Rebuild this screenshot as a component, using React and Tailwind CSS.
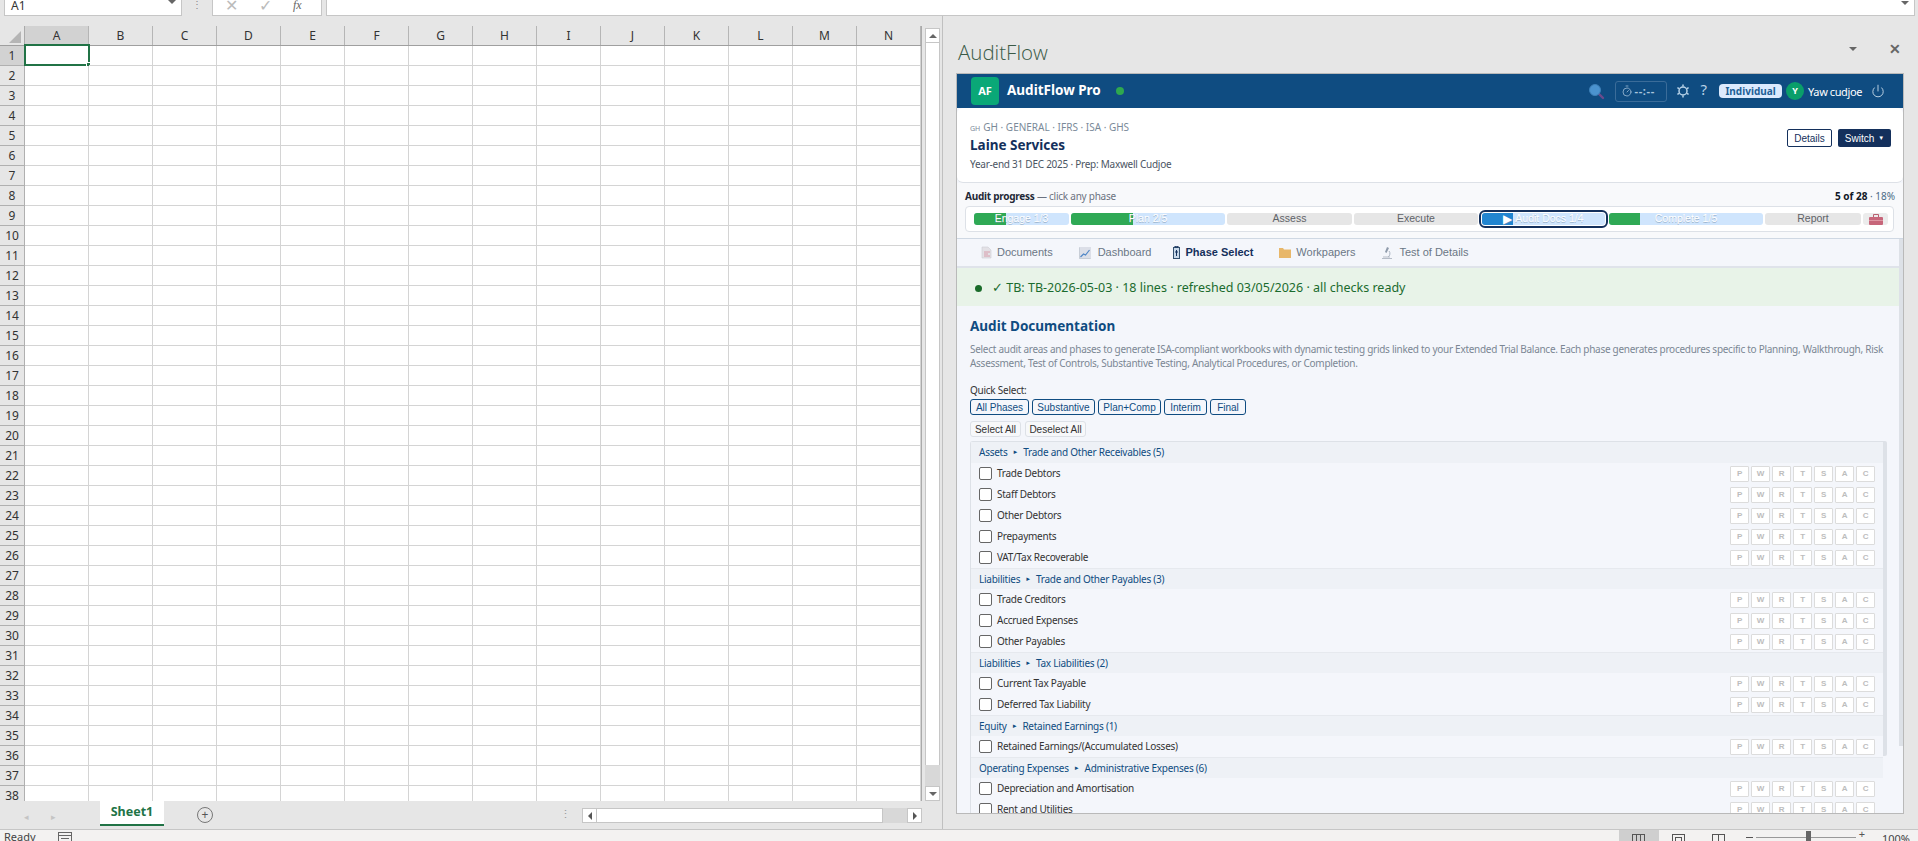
import { Power, Timer } from 'lucide-react';

const columns = ['A', 'B', 'C', 'D', 'E', 'F', 'G', 'H', 'I', 'J', 'K', 'L', 'M', 'N'];
const rowNumbers = Array.from({ length: 38 }, (_, i) => i + 1);

const phases = [
	{ name: 'Engage', done: 1, total: 3, w: 'w-[95px]' },
	{ name: 'Plan', done: 2, total: 5, w: 'w-[154px]' },
	{ name: 'Assess', w: 'w-[125px]' },
	{ name: 'Execute', w: 'w-[124px]' },
	{ name: 'Audit Docs', done: 1, total: 4, w: 'w-[123px]', active: true },
	{ name: 'Complete', done: 1, total: 5, w: 'w-[154px]' },
	{ name: 'Report', w: 'w-[96px]' },
];

const groups = [
	{
		cat: 'Assets',
		title: 'Trade and Other Receivables (5)',
		items: ['Trade Debtors', 'Staff Debtors', 'Other Debtors', 'Prepayments', 'VAT/Tax Recoverable'],
	},
	{
		cat: 'Liabilities',
		title: 'Trade and Other Payables (3)',
		items: ['Trade Creditors', 'Accrued Expenses', 'Other Payables'],
	},
	{ cat: 'Liabilities', title: 'Tax Liabilities (2)', items: ['Current Tax Payable', 'Deferred Tax Liability'] },
	{ cat: 'Equity', title: 'Retained Earnings (1)', items: ['Retained Earnings/(Accumulated Losses)'] },
	{
		cat: 'Operating Expenses',
		title: 'Administrative Expenses (6)',
		items: ['Depreciation and Amortisation', 'Rent and Utilities'],
	},
];

const SearchIcon = () => (
	<svg width="17" height="17" viewBox="0 0 17 17">
		<path d="M10 10l5 5" stroke="#6b4a8c" strokeWidth="2.4" strokeLinecap="round" />
		<circle cx="7" cy="7" r="5.5" fill="#4b93cf" stroke="#3d80b8" />
	</svg>
);

const GearIcon = () => (
	<svg width="14" height="14" viewBox="0 0 14 14" fill="none" stroke="#b7d2e8">
		<circle cx="7" cy="7" r="4" strokeWidth="1.5" />
		<path d="M7 .5v2M7 11.5v2M1.4 3.700l1.700 1M10.900 9.300l1.700 1M1.400 10.300l1.700-1M10.900 4.700l1.700-1" strokeWidth="1.5" />
	</svg>
);

const DocIcon = () => (
	<svg width="11" height="13" viewBox="0 0 11 13">
		<path d="M1 1h6l3 3v8H1z" fill="#e3e1e6" stroke="#cfccd4" strokeWidth=".6" />
		<path d="M3 6h6M3 8h4M3 10h6" stroke="#d68a9c" strokeWidth=".8" />
	</svg>
);

const ChartIcon = () => (
	<svg width="12" height="12" viewBox="0 0 12 12">
		<rect width="12" height="12" fill="#dcdfe8" />
		<path d="M.5 .5v11h11" fill="none" stroke="#c3c9d2" strokeWidth=".8" />
		<path d="M1.500 10l3-3 2 1 4-5" fill="none" stroke="#4f86c6" strokeWidth="1.200" />
	</svg>
);

const PhaseIcon = () => (
	<svg width="7" height="13" viewBox="0 0 7 13">
		<rect x=".5" y="1.500" width="6" height="11" fill="#c9d9ea" stroke="#33506f" />
		<path d="M2 0h3v1H2zM3.500 4v6M2 6h3" stroke="#14305c" fill="none" />
	</svg>
);

const FolderIcon = () => (
	<svg width="12" height="11" viewBox="0 0 12 11">
		<path d="M0 1h4l1 1.500h7V11H0z" fill="#e8b76a" />
	</svg>
);

const ScopeIcon = () => (
	<svg width="12" height="13" viewBox="0 0 12 13">
		<path d="M6 1l2 1-2.500 5-1.500-1z" fill="#8f9bab" />
		<path d="M8 5a4 4 0 0 1-1 6" fill="none" stroke="#a9b3c0" />
		<path d="M1 12h10v1H1zM2 10.500h7v1H2z" fill="#b5bcc7" />
	</svg>
);

const CaseIcon = () => (
	<svg width="14" height="11" viewBox="0 0 14 11">
		<path d="M4.500 3V.5h5V3" fill="none" stroke="#b9606f" />
		<rect y="3" width="14" height="8" rx="1" fill="#c7667a" />
		<path d="M0 6.500h14" stroke="#e3a3af" strokeWidth=".8" />
	</svg>
);

const PhaseSegment = ({ phase }) => {
	const pct = phase.total ? (phase.done / phase.total) * 100 : 0;
	const label = phase.total ? `${phase.name} ${phase.done}/${phase.total}` : phase.name;
	return (
		<div
			className={`relative h-3 shrink-0 rounded-[3px] ${phase.w} ${phase.total ? 'bg-[#cfe5fd]' : 'bg-[#e6e6e6]'} ${
				phase.active ? 'outline-2 outline-offset-1 outline-[#14305c] ml-[2px] mr-[2px]' : ''
			}`}
		>
			{phase.total ? (
				<div
					className={`absolute left-0 top-0 bottom-0 rounded-l-[3px] ${phase.active ? 'bg-[#2185d0]' : 'bg-[#2fa955]'}`}
					style={{ width: `${pct}%` }}
				></div>
			) : null}
			<div
				className={`absolute inset-0 flex items-center justify-center text-[10.5px] font-['Liberation_Sans',sans-serif] ${
					phase.total ? 'text-white [text-shadow:0_1px_0_rgba(120,145,170,0.55)]' : 'text-[#5f6368]'
				}`}
			>
				{phase.active ? <span className="text-white text-[12px] mr-[3px] leading-none">▶</span> : null}
				{label}
			</div>
		</div>
	);
};

const PhaseChips = () => (
	<div className="ml-auto flex gap-[2px] pr-2">
		{['P', 'W', 'R', 'T', 'S', 'A', 'C'].map((c) => (
			<div
				key={c}
				className="w-[19px] h-4 flex items-center justify-center bg-white border border-[#dcdcdc] rounded-[1px] text-[8px] font-bold text-[#bdbdbd] font-['Liberation_Sans',sans-serif]"
			>
				{c}
			</div>
		))}
	</div>
);

const App = () => {
	return (
		<div className="w-[1918px] h-[841px] flex flex-col overflow-hidden bg-[#e6e6e6] font-['Noto_Sans',sans-serif]">
			{/* formula bar */}
			<div className="h-4 shrink-0 flex">
				<div className="ml-1 w-[178px] h-4 bg-white border border-t-0 border-[#c6c6c6] flex items-center justify-between pl-[6px] pr-[5px] text-[12px] text-[#333]">
					<span className="-mt-1">A1</span>
					<span className="w-0 h-0 -mt-3 border-x-[4px] border-x-transparent border-t-[4px] border-t-[#666]"></span>
				</div>
				<div className="w-[30px] text-center text-[#888] text-[10px] leading-[10px] -mt-[1px]">⋮</div>
				<div className="w-[110px] h-4 bg-white border border-t-0 border-[#c6c6c6] flex items-center text-[#bbb] text-[16px] overflow-hidden">
					<span className="ml-[12px] -mt-[6px]">✕</span>
					<span className="ml-[21px] -mt-[6px]">✓</span>
					<span className="ml-[21px] -mt-[6px] text-[#666] text-[12px] italic font-['Liberation_Serif',serif]">fx</span>
				</div>
				<div className="ml-[4px] w-[1589px] h-4 bg-white border border-t-0 border-[#c6c6c6] flex justify-end pr-[5px]">
					<span className="w-0 h-0 mt-[1px] border-x-[4px] border-x-transparent border-t-[4px] border-t-[#666]"></span>
				</div>
			</div>

			{/* work area */}
			<div className="flex h-[813px] shrink-0">
				{/* sheet */}
				<div className="w-[943px] shrink-0 flex flex-col border-r border-[#c0c0c0] h-[813px]">
					<div className="h-[785px] pt-[10px] flex shrink-0">
						<div className="w-[922px] shrink-0 flex flex-col overflow-hidden border-r border-[#aaa]">
							<div className="flex h-5 shrink-0 bg-[#e6e6e6] border-b border-[#9f9f9f]">
								<div className="w-[25px] shrink-0 relative border-r border-[#aaa]">
									<span className="absolute right-[3px] bottom-[2px] w-0 h-0 border-l-[12px] border-l-transparent border-b-[12px] border-b-[#b5b5b5]"></span>
								</div>
								{columns.map((c) => (
									<div
										key={c}
										className={`w-16 shrink-0 flex items-center justify-center border-r border-[#b5b5b5] text-[12px] text-[#333] ${
											c === 'A' ? 'bg-[#d2d2d2]' : ''
										}`}
									>
										{c}
									</div>
								))}
							</div>
							{rowNumbers.map((n) => (
								<div key={n} className="flex h-5 shrink-0 bg-white">
									<div
										className={`w-[25px] shrink-0 flex items-center justify-center border-r border-b border-[#b0b0b0] text-[12px] text-[#333] ${
											n === 1 ? 'bg-[#d2d2d2]' : 'bg-[#e6e6e6]'
										}`}
									>
										{n}
									</div>
									{columns.map((c) => (
										<div key={c} className="relative w-16 shrink-0 border-r border-b border-[#d4d4d4]">
											{n === 1 && c === 'A' ? (
												<div className="absolute -left-px -top-[2px] w-[66px] h-[22px] border-2 border-[#217346]">
													<span className="absolute -right-[3px] -bottom-[3px] w-[5px] h-[5px] bg-[#217346] border border-white"></span>
												</div>
											) : null}
										</div>
									))}
								</div>
							))}
						</div>
						{/* vertical scrollbar */}
						<div className="w-[15px] ml-[3px] mt-[2px] flex flex-col bg-[#d8d8d8]">
							<div className="h-[15px] bg-white border border-[#c6c6c6] flex items-center justify-center">
								<span className="w-0 h-0 border-x-[4px] border-x-transparent border-b-[4px] border-b-[#666]"></span>
							</div>
							<div className="h-[722px] bg-white border-x border-[#c6c6c6]"></div>
							<div className="flex-1"></div>
							<div className="h-[15px] bg-white border border-[#c6c6c6] flex items-center justify-center">
								<span className="w-0 h-0 border-x-[4px] border-x-transparent border-t-[4px] border-t-[#666]"></span>
							</div>
						</div>
					</div>
					{/* sheet tabs */}
					<div className="h-[28px] shrink-0 flex items-start">
						<div className="w-[100px] flex pt-[9px] pl-[24px] gap-[22px] text-[#c4c4c4] text-[9px]">
							<span>◂</span>
							<span>▸</span>
						</div>
						<div className="w-[64px] h-[25px] bg-white border-b-2 border-[#217346] flex items-center justify-center text-[12.5px] font-bold text-[#217346]">
							Sheet1
						</div>
						<div className="ml-[33px] mt-[6px] w-4 h-4 rounded-full border border-[#777] flex items-center justify-center text-[12px] leading-none text-[#555]">
							+
						</div>
						<div className="ml-[347px] mt-[6px] text-[#999] text-[11px] leading-[14px]">⋮</div>
						<div className="ml-[11px] mt-[7px] flex w-[340px] h-[15px]">
							<div className="w-[15px] bg-white border border-[#c6c6c6] flex items-center justify-center">
								<span className="w-0 h-0 border-y-[4px] border-y-transparent border-r-[4px] border-r-[#555]"></span>
							</div>
							<div className="w-[286px] bg-white border-y border-r border-[#c6c6c6]"></div>
							<div className="flex-1 bg-[#d8d8d8]"></div>
							<div className="w-[15px] bg-white border border-[#c6c6c6] flex items-center justify-center">
								<span className="w-0 h-0 border-y-[4px] border-y-transparent border-l-[4px] border-l-[#555]"></span>
							</div>
						</div>
					</div>
				</div>

				{/* task pane */}
				<div className="flex-1 flex flex-col min-w-0">
					<div className="h-[57px] shrink-0 flex items-start pl-[15px] pr-[17px]">
						<div className="mt-[22px] text-[20.5px] leading-[28px] font-light text-[#3a5a46] font-['Open_Sans',sans-serif]">AuditFlow</div>
						<span className="ml-auto mt-[31px] w-0 h-0 border-x-[4px] border-x-transparent border-t-[4px] border-t-[#666]"></span>
						<span className="ml-[32px] mt-[25px] text-[#666] text-[14px] font-bold leading-[16px]">✕</span>
					</div>
					{/* add-in frame */}
					<div className="ml-[13px] w-[948px] h-[741px] shrink-0 border border-[#b9b9b9] flex flex-col bg-[#f4f6fb] overflow-hidden">
						{/* app header */}
						<div className="h-[34px] shrink-0 bg-[#0f4c81] flex items-center pl-[14px] text-white">
							<div className="w-7 h-7 bg-[#0aa877] rounded-[4px] flex items-center justify-center text-[11px] font-bold">AF</div>
							<div className="ml-2 text-[13.5px] font-bold leading-none">AuditFlow Pro</div>
							<div className="ml-[15px] w-2 h-2 rounded-full bg-[#2ea84f]"></div>
							<div className="ml-auto flex items-center">
								<SearchIcon />
								<div className="ml-[10px] w-[52px] h-[21px] border border-[#3b6c99] rounded-[3px] flex items-center pl-[5px] text-[#a9c4dc] text-[11px] font-bold gap-[2px] tracking-[0.6px]">
									<Timer size={12} strokeWidth={1.5} />
									<span>--:--</span>
								</div>
								<div className="ml-[9px]">
									<GearIcon />
								</div>
								<div className="ml-[11px] text-[15px] text-[#b7d2e8] leading-none -mt-[3px]">?</div>
								<div className="ml-3 w-[63px] h-[14px] rounded-[4px] bg-[#dbeafe] text-[#1d5f96] text-[10px] font-bold flex items-center justify-center leading-none">
									Individual
								</div>
								<div className="ml-1 w-[18px] h-[18px] rounded-full bg-[#0a9e6a] flex items-center justify-center text-[9px] font-bold">Y</div>
								<div className="ml-1 text-[11px] leading-none tracking-[-0.4px]">Yaw cudjoe</div>
								<Power size={14} strokeWidth={1.5} className="ml-[9px] mr-[18px] text-[#cfe0ee]" />
							</div>
						</div>
						{/* client card */}
						<div className="h-[75px] shrink-0 bg-white rounded-[6px] border-b border-[#dde1e7] flex items-start pl-[13px] pr-[12px]">
							<div className="flex-1 min-w-0">
								<div className="mt-[12px] flex items-baseline text-[10px] leading-[14px] text-[#7a8a99]">
									<span className="text-[7px] mr-[3px]">GH</span>GH · GENERAL · IFRS · ISA · GHS
								</div>
								<div className="-mt-px text-[13.5px] leading-[20px] font-bold text-[#14305c]">Laine Services</div>
								<div className="mt-[2px] text-[10px] leading-[14px] tracking-[-0.25px] text-[#4b5563]">Year-end 31 DEC 2025 · Prep: Maxwell Cudjoe</div>
							</div>
							<div className="mt-[21px] flex gap-[6px] font-['Liberation_Sans',sans-serif] text-[10px]">
								<div className="w-[45px] h-[18px] bg-white border border-[#14305c] rounded-[2px] text-[#14305c] flex items-center justify-center">Details</div>
								<div className="w-[53px] h-[18px] bg-[#14305c] rounded-[2px] text-white flex items-center justify-center">
									Switch <span className="text-[6px] ml-1">▼</span>
								</div>
							</div>
						</div>
						{/* audit progress */}
						<div className="h-[55px] shrink-0 bg-[#f8f9fb] px-2 pt-[6px]">
							<div className="flex justify-between text-[10px] leading-[14px] tracking-[-0.25px] text-[#6b7280]">
								<div>
									<span className="font-bold text-[#1f2937]">Audit progress</span> — click any phase
								</div>
								<div className="text-[#4a6a85] tracking-normal">
									<span className="font-bold text-[#111827]">5 of 28</span> · 18%
								</div>
							</div>
							<div className="mt-[3px] h-[26px] w-[929px] bg-white border border-[#dde1e7] rounded-[4px] flex items-center gap-[2px] pl-2">
								{phases.map((p) => (
									<PhaseSegment key={p.name} phase={p} />
								))}
								<div className="w-[25px] h-3 bg-[#ececec] rounded-[3px] flex items-center justify-center">
									<CaseIcon />
								</div>
							</div>
						</div>
						{/* scroll area */}
						<div className="flex-1 min-h-0 flex border-t border-[#cfd8e3]">
							<div className="flex-1 min-w-0 flex flex-col">
								<div className="h-[27px] shrink-0 flex items-center pl-6 gap-[26px] text-[11px] text-[#6b7785] font-['Liberation_Sans',sans-serif]">
									<div className="flex items-center gap-[5px]">
										<DocIcon />
										Documents
									</div>
									<div className="flex items-center gap-[7px] -mr-1">
										<ChartIcon />
										Dashboard
									</div>
									<div className="flex items-center gap-[5px] font-bold text-[#14305c]">
										<PhaseIcon />
										Phase Select
									</div>
									<div className="flex items-center gap-[5px]">
										<FolderIcon />
										Workpapers
									</div>
									<div className="flex items-center gap-[6px]">
										<ScopeIcon />
										Test of Details
									</div>
								</div>
								<div className="h-[2px] shrink-0 bg-[#dfe3ea] -mr-1"></div>
								<div className="h-[38px] shrink-0 -mr-1 bg-[#e8f3e8] flex items-center pl-[18px] pt-[3px] text-[12.5px] text-[#1b6b2e]">
									<span className="w-[7px] h-[7px] rounded-full bg-[#1a6b2a] mr-[10px]"></span>✓ TB: TB-2026-05-03 · 18 lines · refreshed 03/05/2026 · all checks ready
								</div>
								{/* documentation body */}
								<div className="flex-1 min-h-0 overflow-hidden pl-[13px] pr-[12px] pt-[10px]">
									<div className="text-[13.5px] leading-[20px] font-bold text-[#0f4c81]">Audit Documentation</div>
									<div className="mt-[6px] text-[10px] leading-[14px] tracking-[-0.28px] whitespace-nowrap text-[#7b8794]">
										Select audit areas and phases to generate ISA-compliant workbooks with dynamic testing grids linked to your Extended Trial Balance. Each phase generates procedures specific to Planning, Walkthrough, Risk
										<br />
										Assessment, Test of Controls, Substantive Testing, Analytical Procedures, or Completion.
									</div>
									<div className="mt-[13px] text-[10px] leading-[14px] tracking-[-0.25px] text-[#333]">Quick Select:</div>
									<div className="mt-[2px] flex gap-[3px] text-[10px] text-[#0f4c81] font-['Liberation_Sans',sans-serif]">
										{[
											['All Phases', 'w-[59px]'],
											['Substantive', 'w-[63px]'],
											['Plan+Comp', 'w-[63px]'],
											['Interim', 'w-[43px]'],
											['Final', 'w-[36px]'],
										].map(([label, w]) => (
											<div key={label} className={`${w} h-4 border border-[#0f4c81] rounded-[3px] flex items-center justify-center`}>
												{label}
											</div>
										))}
									</div>
									<div className="mt-[6px] flex gap-1 text-[10px] text-[#333] font-['Liberation_Sans',sans-serif]">
										<div className="w-[51px] h-4 bg-[#f7f8fa] border border-[#dde1e7] rounded-[3px] flex items-center justify-center">Select All</div>
										<div className="w-[61px] h-4 bg-[#f7f8fa] border border-[#dde1e7] rounded-[3px] flex items-center justify-center">Deselect All</div>
									</div>
									{/* areas list */}
									<div className="mt-1 flex w-[918px]">
										<div className="w-[913px] border-l border-t border-[#dde1e7] rounded-tl-[3px] text-[10px] tracking-[-0.25px]">
											{groups.map((g, i) => (
												<div key={g.title + i}>
													<div className={`h-[21px] bg-[#eef1f6] flex items-center pl-2 text-[#0f4c81] ${i > 0 ? 'border-t border-[#e6e9ee]' : ''}`}>
														{g.cat}
														<span className="mx-[5px] text-[6px]">►</span>
														{g.title}
													</div>
													{g.items.map((item) => (
														<div key={item} className="h-[21px] flex items-center pl-2 text-[#333]">
															<span className="w-[13px] h-[13px] shrink-0 bg-white border border-[#666] rounded-[2px] mr-[5px]"></span>
															{item}
															<PhaseChips />
														</div>
													))}
												</div>
											))}
										</div>
										<div className="w-1 h-[315px] bg-[#dde1e7] rounded-r-[2px]"></div>
									</div>
								</div>
							</div>
							<div className="w-1 shrink-0">
								<div className="h-[507px] bg-[#dde1e7]"></div>
							</div>
						</div>
					</div>
				</div>
			</div>

			{/* status bar */}
			<div className="h-3 shrink-0 border-t border-[#c6c6c6] bg-[#f3f2f1] flex items-start overflow-hidden text-[11px] leading-[14px] text-[#444]">
				<span className="ml-[4px]">Ready</span>
				<div className="ml-[22px] mt-[2px] w-[14px] h-4 border border-[#666] border-b-0">
					<div className="mt-[2px] h-px bg-[#666]"></div>
					<div className="mt-[2px] ml-[2px] w-2 h-px bg-[#666]"></div>
				</div>
				<div className="ml-auto flex items-start">
					<div className="w-[40px] h-3 bg-[#cfcfcf] flex justify-center pt-1">
						<div className="w-[13px] h-3 border border-[#555] flex justify-evenly">
							<div className="w-px h-3 bg-[#555]"></div>
							<div className="w-px h-3 bg-[#555]"></div>
						</div>
					</div>
					<div className="w-[13px] h-3 mt-1 border border-[#555] ml-[13px] p-[2px]">
						<div className="h-3 border border-[#555]"></div>
					</div>
					<div className="w-[13px] h-3 mt-1 border border-[#555] ml-[27px] flex justify-center">
						<div className="w-px h-3 bg-[#555]"></div>
					</div>
					<div className="ml-[21px] w-[7px] h-px mt-[7px] bg-[#555]"></div>
					<div className="relative ml-[3px] w-[100px] h-px mt-[7px] bg-[#999]">
						<span className="absolute left-[50px] -top-[6px] w-[5px] h-3 bg-[#666]"></span>
					</div>
					<div className="ml-[3px] text-[#555] -mt-[3px]">+</div>
					<div className="ml-[17px] mr-[8px] mt-[2px]">100%</div>
				</div>
			</div>
		</div>
	);
};

export default App;
